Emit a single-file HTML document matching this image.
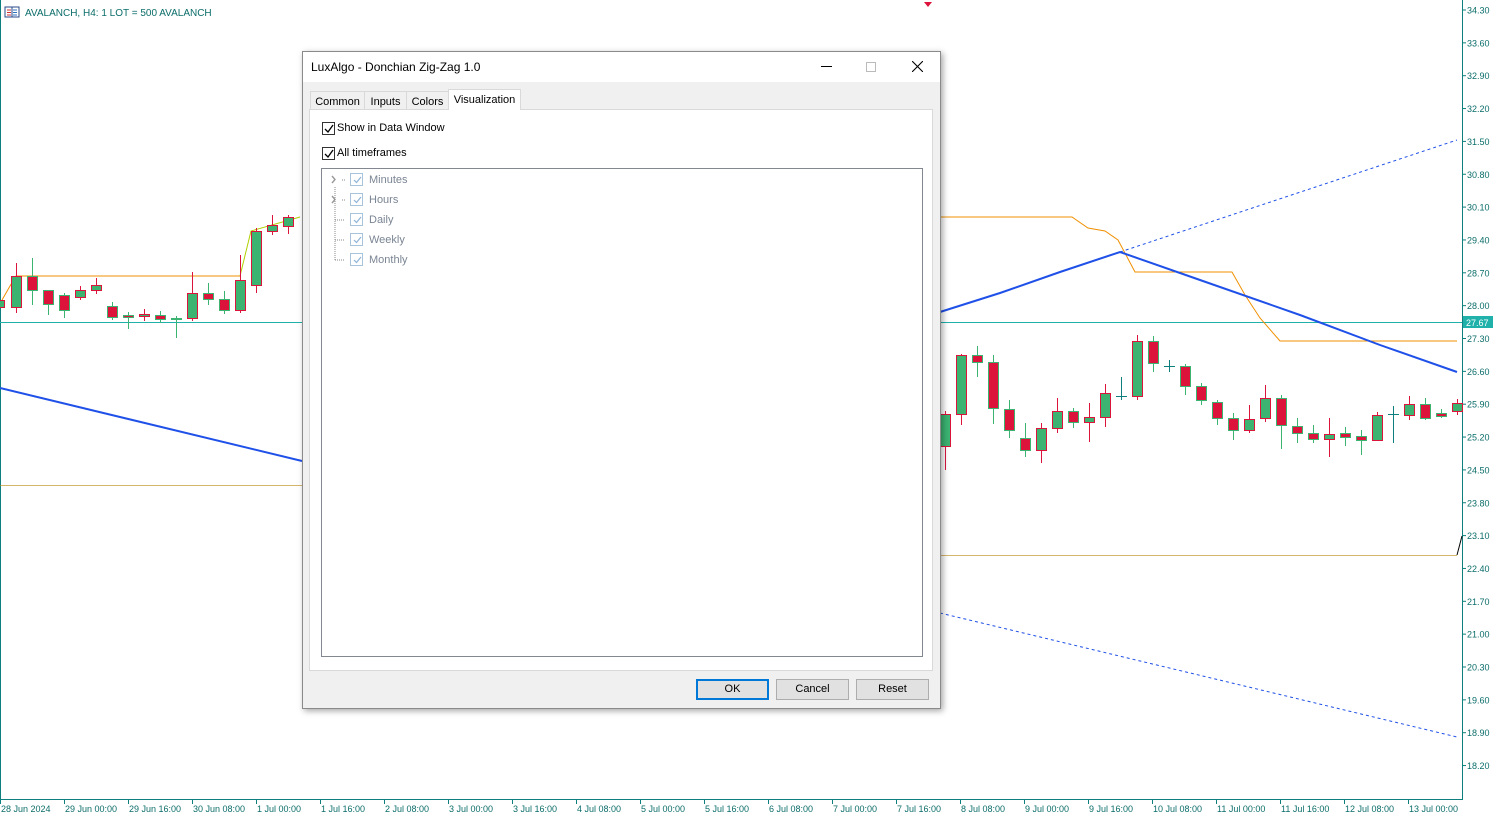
<!DOCTYPE html>
<html><head><meta charset="utf-8"><style>
*{margin:0;padding:0;box-sizing:border-box}
body{width:1500px;height:823px;background:#fff;position:relative;overflow:hidden;font-family:"Liberation Sans",sans-serif}
svg{position:absolute;left:0;top:0}
.dlg{position:absolute;left:302px;top:51px;width:639px;height:658px;background:#f0f0f0;border:1px solid #8a8a8a;box-shadow:2px 2px 6px rgba(0,0,0,.35);font-size:11px;color:#000}
.tb{height:30px;background:#fff;position:relative}
.tb span{position:absolute;left:8px;top:8px;font-size:12px}
.tab{position:absolute;top:39px;height:19px;border:1px solid #d9d9d9;border-bottom:none;background:#f0f0f0;padding:4px 0 0;font-size:11px;text-align:center}
.panel{position:absolute;left:6px;top:57px;width:624px;height:562px;background:#fff;border:1px solid #d9d9d9}
.cb{position:absolute;width:13px;height:13px;border:1px solid #333;background:#fff}
.cb svg,.cb2 svg{position:absolute;left:0;top:0}
.lbl{position:absolute;font-size:11px}
.tree{position:absolute;left:11px;top:58px;width:602px;height:489px;border:1px solid #828790;background:#fff}
.cb2{position:absolute;width:13px;height:13px;border:1px solid #a8c4dc;background:#fff}
.g{position:absolute;color:#7a8593;font-size:11px}
.btn{position:absolute;top:627px;width:73px;height:21px;border:1px solid #adadad;background:#e1e1e1;text-align:center;line-height:19px;font-size:11px}
</style></head><body>
<svg width="1500" height="823" viewBox="0 0 1500 823">
<g stroke="#0e7f7c" fill="none"><line x1="0.5" y1="0" x2="0.5" y2="800"/><line x1="1462.5" y1="0" x2="1462.5" y2="800"/><line x1="0" y1="799.5" x2="1463" y2="799.5"/></g>
<g fill="#0b6d6a" font-family="Liberation Sans" font-size="9.5">
<text x="25" y="16" font-size="10">AVALANCH, H4:  1 LOT = 500 AVALANCH</text>
</g>
<rect x="5" y="7" width="14" height="10" fill="none" stroke="#2a4a8a"/><line x1="12" y1="7" x2="12" y2="17" stroke="#2a4a8a"/>
<g stroke="#d03030"><line x1="7" y1="10" x2="11" y2="10"/><line x1="7" y1="12.5" x2="11" y2="12.5"/><line x1="7" y1="15" x2="11" y2="15"/></g>
<g stroke="#3070c0"><line x1="13" y1="10" x2="17" y2="10"/><line x1="13" y1="12.5" x2="17" y2="12.5"/><line x1="13" y1="15" x2="17" y2="15"/></g>
<polygon points="924,2 932,2 928,7" fill="#dc143c"/>
<g id="ax" fill="#0b6d6a" font-family="Liberation Sans" font-size="9"></g>
<line x1="0" y1="322.5" x2="1462" y2="322.5" stroke="#20b2aa"/>
<rect x="1463" y="316" width="30" height="12" fill="#20b2aa"/><text x="1466" y="326" fill="#fff" font-family="Liberation Sans" font-size="9">27.67</text>
<line x1="0" y1="485.5" x2="302" y2="485.5" stroke="#b8860b" stroke-opacity=".6"/>
<line x1="940" y1="555.5" x2="1457" y2="555.5" stroke="#b8860b" stroke-opacity=".6"/>
<polyline points="1457,555 1462,536" stroke="#000" fill="none"/>
<polyline points="2,300 10,286 16,276 240,276" stroke="#f09000" fill="none"/>
<polyline points="240,276 251,231 300,217" stroke="#b0d000" fill="none"/>
<polyline points="940,217 1072,217 1088,228 1105,231 1118,240 1126,255 1135,272 1232,272 1245,295 1260,318 1280,341 1457,341" stroke="#f09000" fill="none"/>
<polyline points="0,388 302,461" stroke="#1f50e8" stroke-width="2" fill="none"/>
<polyline points="940,312 1000,293 1060,272 1120,252 1200,280 1300,315 1380,345 1457,372" stroke="#1f50e8" stroke-width="2" fill="none"/>
<polyline points="1120,252 1457,140" stroke="#1f50e8" stroke-dasharray="3,3" fill="none"/>
<polyline points="940,613 1457,737" stroke="#1f50e8" stroke-dasharray="3,3" fill="none"/>
<g id="cd"></g>
</svg>
<script>
var ax=document.getElementById('ax'),s='';
var p=['34.30','33.60','32.90','32.20','31.50','30.80','30.10','29.40','28.70','28.00','27.30','26.60','25.90','25.20','24.50','23.80','23.10','22.40','21.70','21.00','20.30','19.60','18.90','18.20'];
p.forEach(function(v,i){var y=10+i*32.85;s+='<line x1="1462" y1="'+y+'" x2="1466" y2="'+y+'" stroke="#0e7f7c"/><text x="1467" y="'+(y+3.5)+'">'+v+'</text>';});
var t=['28 Jun 2024','29 Jun 00:00','29 Jun 16:00','30 Jun 08:00','1 Jul 00:00','1 Jul 16:00','2 Jul 08:00','3 Jul 00:00','3 Jul 16:00','4 Jul 08:00','5 Jul 00:00','5 Jul 16:00','6 Jul 08:00','7 Jul 00:00','7 Jul 16:00','8 Jul 08:00','9 Jul 00:00','9 Jul 16:00','10 Jul 08:00','11 Jul 00:00','11 Jul 16:00','12 Jul 08:00','13 Jul 00:00'];
t.forEach(function(v,i){var x=i*64;s+='<line x1="'+(x+0.5)+'" y1="800" x2="'+(x+0.5)+'" y2="804" stroke="#0e7f7c"/><text x="'+(x+1)+'" y="812">'+v+'</text>';});
ax.innerHTML=s;
var c=[[-1,'b',300,307,298,310],[16,'u',276,307,263,313],[32,'d',276,290,258,305],[48,'d',290,304,290,315],[64,'d',295,310,293,318],[80,'u',290,297,286,300],[96,'u',285,290,278,294],[112,'d',306,317,302,320],[128,'d',315,317,312,329],[144,'u',314,316,309,321],[160,'d',315,319,311,323],[176,'d',318,319,316,338],[192,'u',293,318,272,321],[208,'d',293,299,283,305],[224,'d',299,310,291,314],[240,'u',280,310,255,313],[256,'u',231,285,228,293],[272,'u',225,231,215,235],[288,'u',217,226,215,234],
[945,'u',414,446,411,470],[961,'u',355,414,354,425],[977,'d',355,362,346,377],[993,'d',362,408,355,424],[1009,'d',409,430,400,438],[1025,'d',438,450,423,457],[1041,'u',428,450,423,463],[1057,'u',411,428,398,433],[1073,'d',411,422,408,428],[1089,'u',417,422,403,442],[1105,'u',393,417,384,427],[1121,'x',396,396,377,400],[1137,'u',341,396,335,400],[1153,'d',341,363,336,372],[1169,'x',366,366,360,372],[1185,'d',366,386,364,395],[1201,'d',386,400,383,405],[1217,'d',402,418,400,425],[1233,'d',418,430,413,440],[1249,'u',419,430,405,433],[1265,'u',398,418,385,422],[1281,'d',398,425,395,449],[1297,'d',426,433,418,443],[1313,'d',433,439,425,443],[1329,'u',434,439,418,457],[1345,'d',433,437,427,446],[1361,'d',436,440,430,455],[1377,'u',415,440,412,441],[1393,'x',414,414,406,443],[1409,'u',404,415,396,420],[1425,'d',404,418,398,420],[1441,'d',413,416,409,418],[1457,'u',403,411,399,415]];
var h='';c.forEach(function(k){var x=k[0],G='#3cb371',R='#dc143c';
if(k[1]=='x'){h+='<line x1="'+(x+.5)+'" y1="'+k[4]+'" x2="'+(x+.5)+'" y2="'+k[5]+'" stroke="#0e7f7c"/><line x1="'+(x-5)+'" y1="'+(k[2]+.5)+'" x2="'+(x+6)+'" y2="'+(k[2]+.5)+'" stroke="#0e7f7c"/>';return;}
var f=k[1]=='d'?R:G,st=k[1]=='d'?G:R;
h+='<line x1="'+(x+.5)+'" y1="'+k[4]+'" x2="'+(x+.5)+'" y2="'+k[5]+'" stroke="'+st+'"/><rect x="'+(x-4.5)+'" y="'+(k[2]+.5)+'" width="10" height="'+Math.max(1,k[3]-k[2])+'" fill="'+f+'" stroke="'+st+'"/>';});
document.getElementById('cd').innerHTML=h;
</script>
<div class="dlg">
<div class="tb"><span>LuxAlgo - Donchian Zig-Zag 1.0</span>
<div style="position:absolute;left:518px;top:14px;width:11px;height:1px;background:#000"></div>
<div style="position:absolute;left:563px;top:10px;width:10px;height:10px;border:1px solid #bbb"></div>
<svg style="position:absolute;left:609px;top:9px" width="11" height="11"><path d="M0 0L11 11M11 0L0 11" stroke="#000" stroke-width="1.1"/></svg>
</div>
<div class="tab" style="left:7px;width:55px">Common</div>
<div class="tab" style="left:61px;width:43px">Inputs</div>
<div class="tab" style="left:103px;width:43px">Colors</div>
<div class="tab" style="left:145px;top:37px;height:21px;width:73px;background:#fff;z-index:2;padding-top:4px">Visualization</div>
<div class="panel">
<div class="cb" style="left:12px;top:12px"><svg width="13" height="13"><path d="M2 6L5 9L10 2" stroke="#000" fill="none" stroke-width="1.3"/></svg></div><div class="lbl" style="left:27px;top:12px">Show in Data Window</div>
<div class="cb" style="left:12px;top:37px"><svg width="13" height="13"><path d="M2 6L5 9L10 2" stroke="#000" fill="none" stroke-width="1.3"/></svg></div><div class="lbl" style="left:27px;top:37px">All timeframes</div>
<div class="tree">
<svg width="60" height="100" style="position:absolute;left:0;top:0"><path d="M10 7L13 10.5L10 14M10 27L13 30.5L10 34" stroke="#999" fill="none" stroke-width="1.4"/><path d="M20 11h3M20 31h3M13 18v73M13 51h10M13 71h10M13 91h10" stroke="#888" stroke-dasharray="1,1" fill="none"/></svg>
<div class="cb2" style="left:28px;top:4px"><svg width="13" height="13"><path d="M3 6L5.5 8.5L10 3" stroke="#8fb3d6" fill="none" stroke-width="1.2"/></svg></div><div class="g" style="left:47px;top:5px">Minutes</div>
<div class="cb2" style="left:28px;top:24px"><svg width="13" height="13"><path d="M3 6L5.5 8.5L10 3" stroke="#8fb3d6" fill="none" stroke-width="1.2"/></svg></div><div class="g" style="left:47px;top:25px">Hours</div>
<div class="cb2" style="left:28px;top:44px"><svg width="13" height="13"><path d="M3 6L5.5 8.5L10 3" stroke="#8fb3d6" fill="none" stroke-width="1.2"/></svg></div><div class="g" style="left:47px;top:45px">Daily</div>
<div class="cb2" style="left:28px;top:64px"><svg width="13" height="13"><path d="M3 6L5.5 8.5L10 3" stroke="#8fb3d6" fill="none" stroke-width="1.2"/></svg></div><div class="g" style="left:47px;top:65px">Weekly</div>
<div class="cb2" style="left:28px;top:84px"><svg width="13" height="13"><path d="M3 6L5.5 8.5L10 3" stroke="#8fb3d6" fill="none" stroke-width="1.2"/></svg></div><div class="g" style="left:47px;top:85px">Monthly</div>
</div>
</div>
<div class="btn" style="left:393px;border:2px solid #0078d7;line-height:17px">OK</div>
<div class="btn" style="left:473px">Cancel</div>
<div class="btn" style="left:553px">Reset</div>
</div>
</body></html>
